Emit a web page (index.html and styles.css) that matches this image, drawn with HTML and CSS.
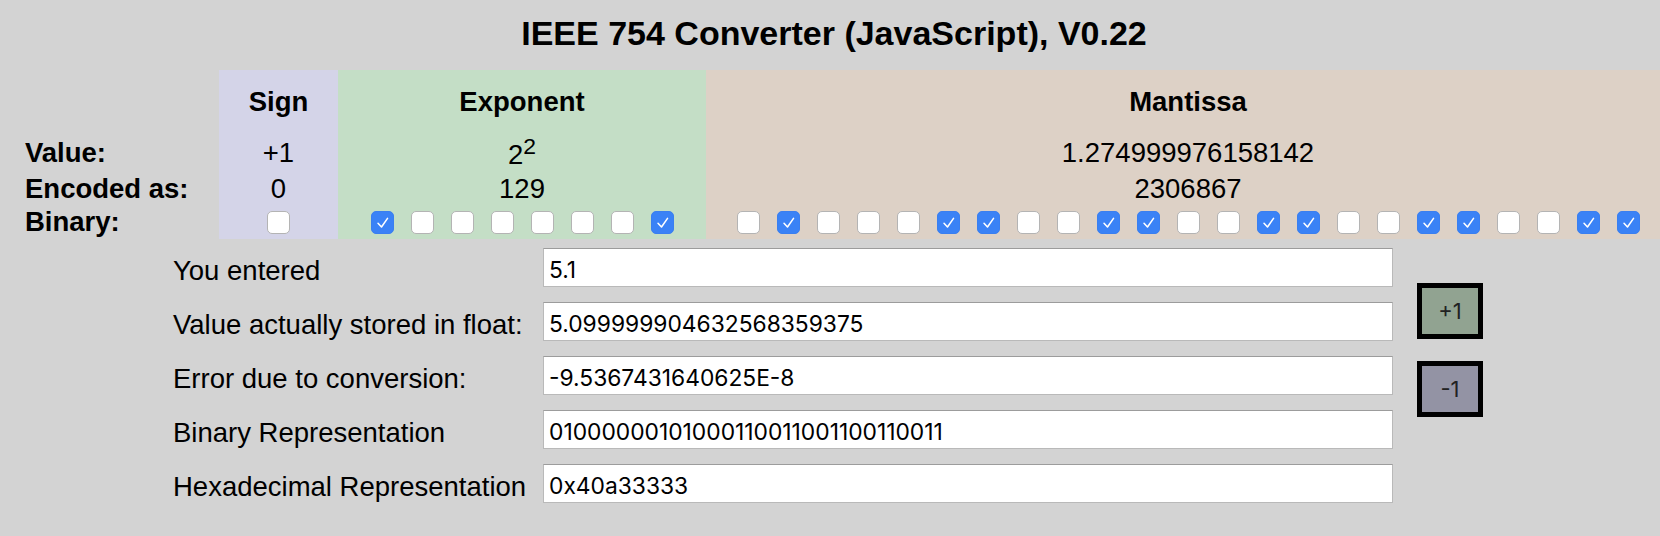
FILE: index.html
```html
<!DOCTYPE html>
<html lang="en">
<head>
<meta charset="utf-8">
<title>IEEE 754 Converter</title>
<link rel="stylesheet" href="styles.css">
</head>
<body>
<h1 class="title">IEEE 754 Converter (JavaScript), V0.22</h1>

<div class="fields">
  <div class="cell"></div>
  <div class="cell head sign">Sign</div>
  <div class="cell head exp">Exponent</div>
  <div class="cell head man">Mantissa</div>

  <div class="cell label">Value:</div>
  <div class="cell sign">+1</div>
  <div class="cell exp"><span>2<sup>2</sup></span></div>
  <div class="cell man">1.274999976158142</div>

  <div class="cell label">Encoded as:</div>
  <div class="cell sign">0</div>
  <div class="cell exp">129</div>
  <div class="cell man">2306867</div>

  <div class="cell label">Binary:</div>
  <div class="cell sign">
    <div class="bits"><span class="bit"></span></div>
  </div>
  <div class="cell exp">
    <div class="bits">
      <span class="bit on"><svg viewBox="0 0 23 23"><path d="M6.6 12.4 L10.4 16.4 L17 7"/></svg></span>
      <span class="bit"></span><span class="bit"></span><span class="bit"></span><span class="bit"></span><span class="bit"></span><span class="bit"></span>
      <span class="bit on"><svg viewBox="0 0 23 23"><path d="M6.6 12.4 L10.4 16.4 L17 7"/></svg></span>
    </div>
  </div>
  <div class="cell man">
    <div class="bits">
      <span class="bit"></span>
      <span class="bit on"><svg viewBox="0 0 23 23"><path d="M6.6 12.4 L10.4 16.4 L17 7"/></svg></span>
      <span class="bit"></span><span class="bit"></span><span class="bit"></span>
      <span class="bit on"><svg viewBox="0 0 23 23"><path d="M6.6 12.4 L10.4 16.4 L17 7"/></svg></span>
      <span class="bit on"><svg viewBox="0 0 23 23"><path d="M6.6 12.4 L10.4 16.4 L17 7"/></svg></span>
      <span class="bit"></span><span class="bit"></span>
      <span class="bit on"><svg viewBox="0 0 23 23"><path d="M6.6 12.4 L10.4 16.4 L17 7"/></svg></span>
      <span class="bit on"><svg viewBox="0 0 23 23"><path d="M6.6 12.4 L10.4 16.4 L17 7"/></svg></span>
      <span class="bit"></span><span class="bit"></span>
      <span class="bit on"><svg viewBox="0 0 23 23"><path d="M6.6 12.4 L10.4 16.4 L17 7"/></svg></span>
      <span class="bit on"><svg viewBox="0 0 23 23"><path d="M6.6 12.4 L10.4 16.4 L17 7"/></svg></span>
      <span class="bit"></span><span class="bit"></span>
      <span class="bit on"><svg viewBox="0 0 23 23"><path d="M6.6 12.4 L10.4 16.4 L17 7"/></svg></span>
      <span class="bit on"><svg viewBox="0 0 23 23"><path d="M6.6 12.4 L10.4 16.4 L17 7"/></svg></span>
      <span class="bit"></span><span class="bit"></span>
      <span class="bit on"><svg viewBox="0 0 23 23"><path d="M6.6 12.4 L10.4 16.4 L17 7"/></svg></span>
      <span class="bit on"><svg viewBox="0 0 23 23"><path d="M6.6 12.4 L10.4 16.4 L17 7"/></svg></span>
    </div>
  </div>
</div>

<div class="form">
  <label class="form-label" for="f1">You entered</label>
  <input class="field" id="f1" type="text" value="5.1">

  <label class="form-label" for="f2">Value actually stored in float:</label>
  <input class="field" id="f2" type="text" value="5.099999904632568359375">

  <div class="buttons">
    <button class="btn plus" type="button">+1</button>
    <button class="btn minus" type="button">-1</button>
  </div>

  <label class="form-label" for="f3">Error due to conversion:</label>
  <input class="field" id="f3" type="text" value="-9.5367431640625E-8">

  <label class="form-label" for="f4">Binary Representation</label>
  <input class="field" id="f4" type="text" value="01000000101000110011001100110011">

  <label class="form-label" for="f5">Hexadecimal Representation</label>
  <input class="field" id="f5" type="text" value="0x40a33333">
</div>
</body>
</html>
```

FILE: styles.css
```css
html, body {
  margin: 0;
  padding: 0;
  background: #d3d3d3;
}

body {
  font-family: "Liberation Sans", Arial, Helvetica, sans-serif;
  color: #000;
}

.title {
  margin: 14px 0 17px;
  padding-left: 8px;
  font-size: 34px;
  font-weight: bold;
  line-height: normal;
  text-align: center;
}

.fields {
  display: grid;
  grid-template-columns: 219px 119px 368px 954px;
  grid-template-rows: 63px 39px 33px 34px;
  font-size: 27.5px;
  line-height: normal;
}

.cell {
  display: flex;
  align-items: center;
  justify-content: center;
  white-space: nowrap;
}

.label {
  justify-content: flex-start;
  padding-left: 25px;
  font-weight: bold;
}

.head {
  font-weight: bold;
}

.sign {
  background: #d4d4e8;
}

.exp {
  background: #c4dec6;
}

.man {
  background: #ddd1c6;
  padding-left: 10px;
}

.bits {
  display: flex;
  gap: 17px;
}

.bit {
  display: flex;
  width: 23px;
  height: 23px;
  box-sizing: border-box;
  border: 1px solid #b4b4b4;
  border-radius: 5px;
  background: #fff;
}

.bit.on {
  background: #3a82f6;
  border-color: #3a7ff0;
}

.bit svg {
  width: 100%;
  height: 100%;
}

.bit svg path {
  fill: none;
  stroke: #fff;
  stroke-width: 1.7;
  stroke-linecap: round;
  stroke-linejoin: round;
}

.form {
  display: grid;
  grid-template-columns: 356px 850px 76px;
  grid-auto-rows: 39px;
  column-gap: 14px;
  row-gap: 15px;
  margin-top: 9px;
  padding-left: 173px;
}

.form-label {
  grid-column: 1;
  align-self: center;
  padding-top: 7px;
  font-size: 27.5px;
  line-height: normal;
  white-space: nowrap;
}

.field {
  grid-column: 2;
  width: 850px;
  height: 39px;
  box-sizing: border-box;
  margin: 0;
  padding: 4px 5px 0;
  border: 1px solid #b9b9b9;
  border-top-color: #9c9c9c;
  border-radius: 0;
  background: #fff;
  color: #000;
  font-family: Inter, "Noto Sans", sans-serif;
  font-size: 22.8px;
  outline: none;
}

.buttons {
  grid-column: 3;
  grid-row: 2 / span 2;
  align-self: center;
  justify-self: end;
  display: flex;
  flex-direction: column;
  gap: 22px;
  margin-top: 3px;
}

.btn {
  width: 66px;
  height: 56px;
  box-sizing: border-box;
  margin: 0;
  padding: 0;
  border: 5px solid #000;
  border-radius: 0;
  color: #222;
  font-family: Inter, "Noto Sans", sans-serif;
  font-size: 22px;
}

.plus {
  background: #91a391;
}

.minus {
  background: #9393a4;
}
```
